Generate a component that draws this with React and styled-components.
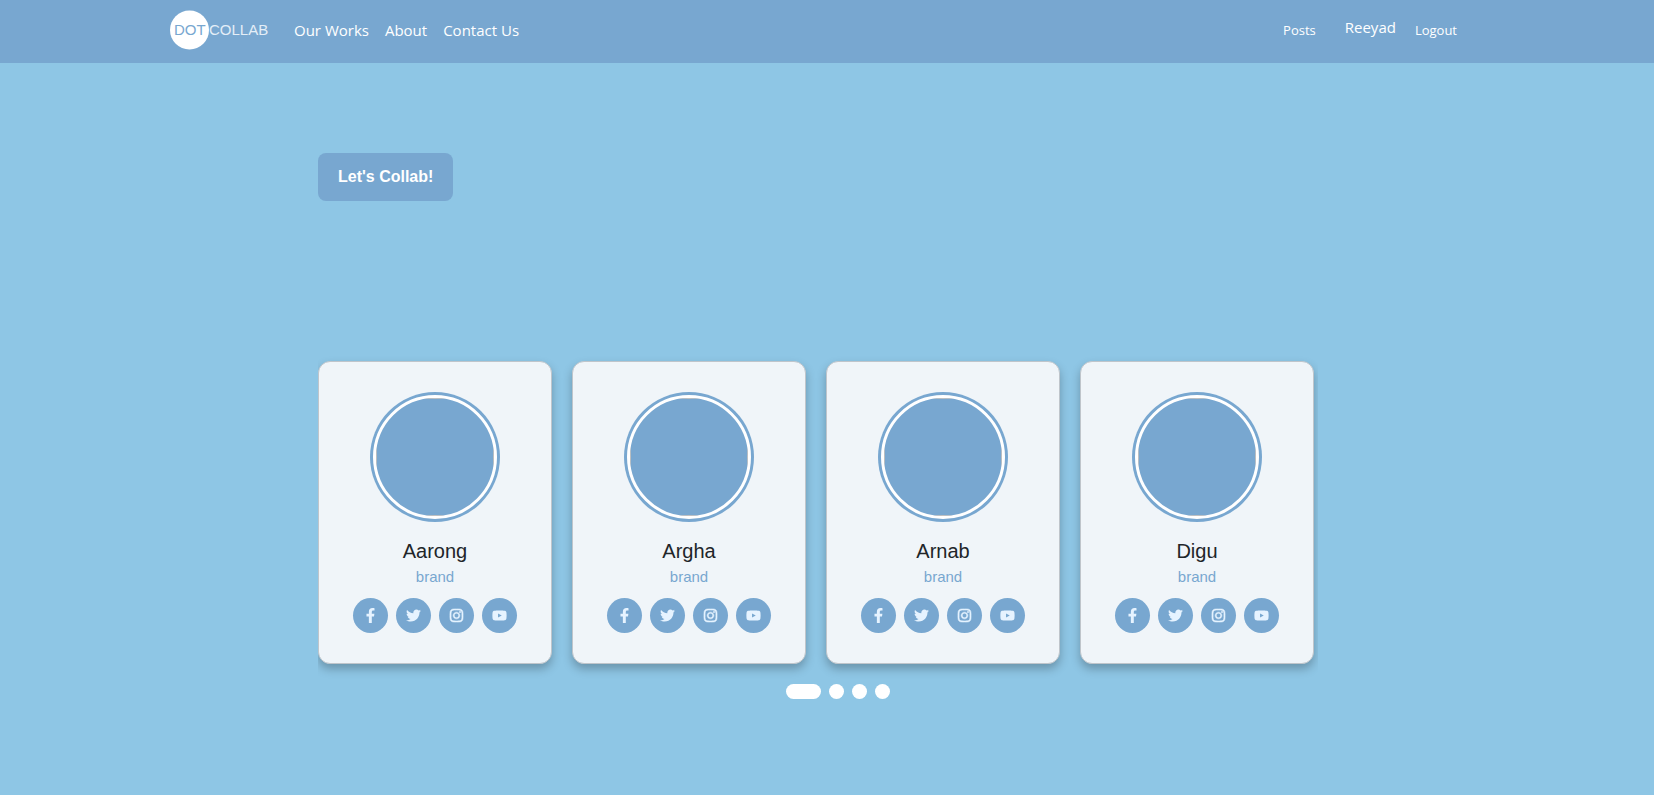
import React, { useState } from "react";
import styled, { createGlobalStyle, ThemeProvider } from "styled-components";
import { FaFacebookF, FaTwitter, FaInstagram, FaYoutube } from "react-icons/fa";

const theme = {
  sky: "#8ec6e5",
  blue: "#78a7d0",
  card: "#f0f5f9",
  icon: "#e6f3ff",
  ui: '"Open Sans", "Noto Sans", sans-serif',
  body: '"Liberation Sans", Arial, sans-serif',
};

const GlobalStyle = createGlobalStyle`
  *, *::before, *::after { box-sizing: border-box; }
  body {
    margin: 0;
    background: ${theme.sky};
    font-family: ${theme.body};
  }
`;

const Header = styled.header`
  background: ${({ theme }) => theme.blue};
  padding-right: 18px;
`;

const Nav = styled.nav`
  display: flex;
  align-items: center;
  max-width: 1320px;
  min-height: 63px;
  margin: 0 auto;
  padding: 0 21px 3px 12px;
`;

const Brand = styled.a`
  display: block;
  line-height: 0;
  margin-right: 24px;
`;

const NavGroup = styled.div`
  display: flex;
  align-items: flex-start;
  gap: ${({ $gap }) => $gap}px;
  margin-left: ${({ $end }) => ($end ? "auto" : "0")};
`;

const NavLink = styled.a`
  color: #fff;
  font-family: ${({ theme }) => theme.ui};
  font-size: ${({ $small }) => ($small ? 13 : 15)}px;
  line-height: 30px;
  text-decoration: none;
  white-space: nowrap;
`;

const UserName = styled(NavLink)`
  line-height: 24px;
  margin-left: 10px;
`;

const Page = styled.main`
  padding: 90px 18px 90px 0;
`;

const Content = styled.div`
  max-width: 1000px;
  margin: 0 auto;
`;

const CollabButton = styled.button`
  display: block;
  height: 48px;
  padding: 0 20px;
  border: 0;
  border-radius: 8px;
  background: ${({ theme }) => theme.blue};
  color: #fff;
  font-family: inherit;
  font-size: 16px;
  font-weight: 700;
  cursor: pointer;
`;

const Slider = styled.section`
  margin-top: 150px;
  padding: 10px 4px 20px 0;
  overflow: hidden;
`;

const Slides = styled.div`
  display: grid;
  grid-template-columns: repeat(4, 1fr);
  gap: 20px;
`;

const Card = styled.article`
  display: flex;
  flex-direction: column;
  align-items: center;
  padding: 30px 20px;
  border: 1px solid #bfc5cb;
  border-radius: 12px;
  background: ${({ theme }) => theme.card};
  box-shadow: 0 5px 10px rgba(0, 0, 0, 0.25);
`;

const Avatar = styled.div`
  width: 130px;
  height: 130px;
  padding: 3px;
  border-radius: 50%;
  background: ${({ theme }) => theme.blue};
`;

const AvatarPicture = styled.div`
  height: 100%;
  border: 3px solid #fff;
  border-radius: 50%;
  overflow: hidden;

  &::after {
    content: "";
    display: block;
    height: 100%;
    border: 1px solid #c0c0c0;
  }
`;

const Name = styled.h2`
  margin: 16px 0 0;
  color: #212529;
  font-size: 20px;
  font-weight: 400;
  line-height: 26px;
`;

const Role = styled.p`
  margin: 0 0 8px;
  color: ${({ theme }) => theme.blue};
  font-size: 15px;
  line-height: 26px;
`;

const SocialRow = styled.div`
  display: flex;
  gap: 8px;
`;

const SocialLink = styled.a`
  display: flex;
  align-items: center;
  justify-content: center;
  width: 35px;
  height: 35px;
  border-radius: 50%;
  background: ${({ theme }) => theme.blue};
  color: ${({ theme }) => theme.icon};

  svg {
    width: auto;
    height: 15px;
    stroke-width: ${({ $bold }) => ($bold ? 18 : 0)};
  }
`;

const Dots = styled.div`
  display: flex;
  justify-content: center;
  gap: 8px;
  padding-left: 40px;
`;

const Dot = styled.button`
  width: ${({ $active }) => ($active ? 35 : 15)}px;
  height: 15px;
  padding: 0;
  border: 0;
  border-radius: 8px;
  background: #fff;
  cursor: pointer;
`;

const people = ["Aarong", "Argha", "Arnab", "Digu"];

const networks = [
  ["Facebook", FaFacebookF],
  ["Twitter", FaTwitter],
  ["Instagram", FaInstagram],
  ["YouTube", FaYoutube],
];

function Logo() {
  return (
    <svg width="100" height="40" viewBox="0 0 100 40" role="img" aria-label="DOT COLLAB">
      <circle cx="19.5" cy="20" r="19.5" fill="#fff" />
      <g fontFamily={theme.body} fontSize="15">
        <text x="4" y="25" fill={theme.blue}>
          DOT
        </text>
        <text x="39" y="25" fill="#e4eef7">
          COLLAB
        </text>
      </g>
    </svg>
  );
}

function ProfileCard({ name }) {
  return (
    <Card>
      <Avatar>
        <AvatarPicture />
      </Avatar>
      <Name>{name}</Name>
      <Role>brand</Role>
      <SocialRow>
        {networks.map(([label, Icon]) => (
          <SocialLink
            key={label}
            href="#"
            aria-label={`${name} on ${label}`}
            $bold={label === "Instagram"}
          >
            <Icon />
          </SocialLink>
        ))}
      </SocialRow>
    </Card>
  );
}

export default function App() {
  const [active, setActive] = useState(0);

  return (
    <ThemeProvider theme={theme}>
      <GlobalStyle />
      <Header>
        <Nav>
          <Brand href="#">
            <Logo />
          </Brand>
          <NavGroup $gap={16}>
            <NavLink href="#">Our Works</NavLink>
            <NavLink href="#">About</NavLink>
            <NavLink href="#">Contact Us</NavLink>
          </NavGroup>
          <NavGroup $gap={19} $end>
            <NavLink href="#" $small>Posts</NavLink>
            <UserName href="#">Reeyad</UserName>
            <NavLink href="#" $small>Logout</NavLink>
          </NavGroup>
        </Nav>
      </Header>
      <Page>
        <Content>
          <CollabButton type="button">Let's Collab!</CollabButton>
          <Slider>
            <Slides>
              {people.map((name) => (
                <ProfileCard key={name} name={name} />
              ))}
            </Slides>
          </Slider>
          <Dots>
            {[0, 1, 2, 3].map((i) => (
              <Dot
                key={i}
                type="button"
                aria-label={`Page ${i + 1}`}
                $active={i === active}
                onClick={() => setActive(i)}
              />
            ))}
          </Dots>
        </Content>
      </Page>
    </ThemeProvider>
  );
}
